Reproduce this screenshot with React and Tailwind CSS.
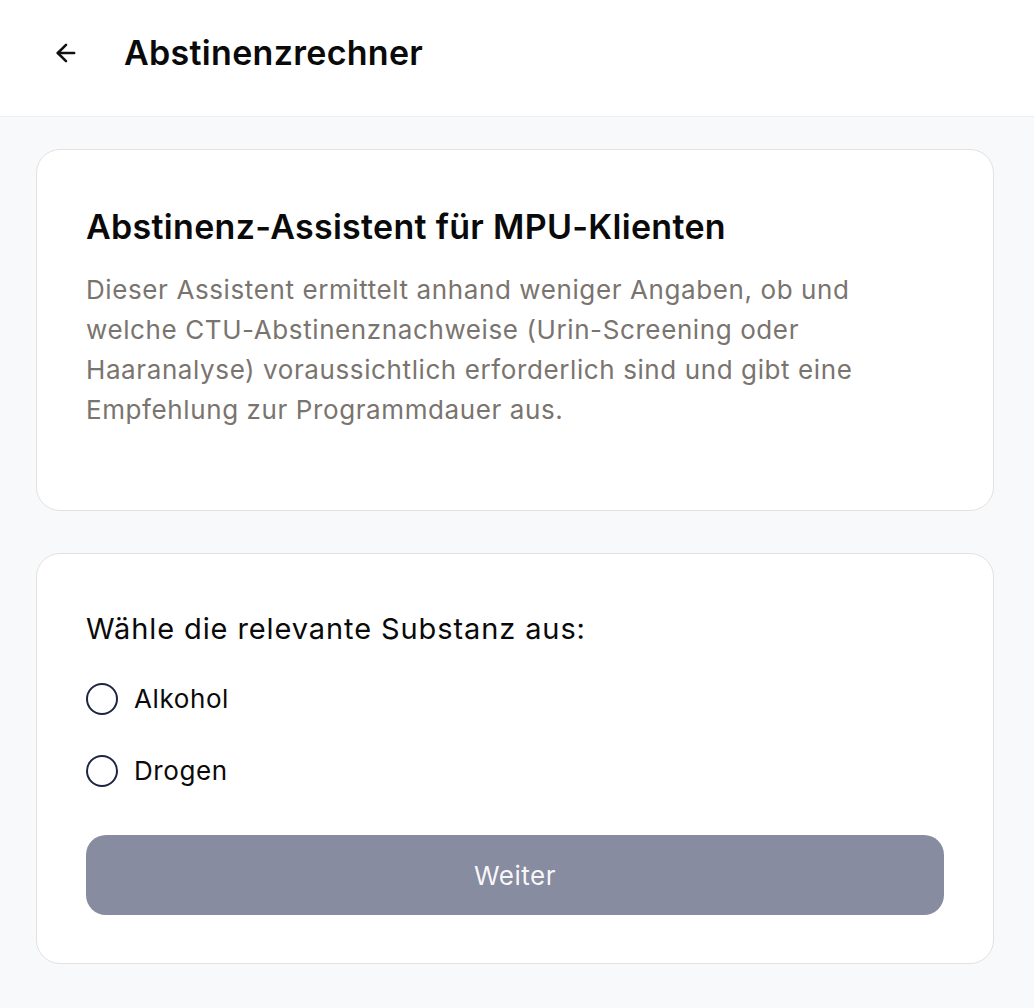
import React, { useState } from "react";
import { ArrowLeft } from "lucide-react";

const Radio = ({ label, checked, onChange }) => {
  return (
    <label className="flex items-center gap-[16px] cursor-pointer h-[40px]">
      <span
        className={
          "w-[32px] h-[32px] rounded-full border-[2px] border-[#1c2542] flex items-center justify-center shrink-0 " +
          (checked ? "bg-white" : "")
        }
        onClick={onChange}
      >
        {checked && <span className="w-[16px] h-[16px] rounded-full bg-[#1c2542]" />}
      </span>
      <span className="text-[26px] leading-[40px] tracking-[0.6px] text-[#0a0a0a]">{label}</span>
    </label>
  );
};

const App = () => {
  const [substance, setSubstance] = useState(null);

  return (
    <div className="min-h-screen bg-[#f8f9fb] font-['Inter',sans-serif]">
      {/* header */}
      <header className="h-[117px] pb-[11px] bg-white border-b border-[#eceef2] flex items-center pl-[52px] gap-[44px]">
        <ArrowLeft size={28} strokeWidth={2.2} className="text-[#111]" />
        <h1 className="text-[34px] font-semibold text-[#0a0a0a] tracking-[0.3px]">
          Abstinenzrechner
        </h1>
      </header>

      <main className="pl-[36px] pr-[40px] pt-[32px] pb-[40px] flex flex-col gap-[42px]">
        <div className="bg-white border border-[#e4e2e0] rounded-[24px] px-[49px] pt-[54px] pb-[80px]">
          <h2 className="text-[34px] leading-[46px] font-semibold text-[#0a0a0a] tracking-[0.3px]">
            Abstinenz-Assistent für MPU-Klienten
          </h2>
          <p className="mt-[20px] text-[26px] leading-[40px] tracking-[0.6px] text-[#7a746f] max-w-[800px]">
            Dieser Assistent ermittelt anhand weniger Angaben, ob und welche
            CTU-Abstinenznachweise (Urin-Screening oder Haaranalyse)
            voraussichtlich erforderlich sind und gibt eine Empfehlung zur
            Programmdauer aus.
          </p>
        </div>

        <div className="bg-white border border-[#e4e2e0] rounded-[24px] px-[49px] pt-[55px] pb-[48px]">
          <p className="text-[29px] leading-[40px] font-normal tracking-[0.9px] text-[#0a0a0a]">
            Wähle die relevante Substanz aus:
          </p>
          <div className="mt-[30px] flex flex-col gap-[32px]">
            <Radio
              label="Alkohol"
              checked={substance === "alkohol"}
              onChange={() => setSubstance("alkohol")}
            />
            <Radio
              label="Drogen"
              checked={substance === "drogen"}
              onChange={() => setSubstance("drogen")}
            />
          </div>
          <button
            disabled={!substance}
            className="mt-[44px] w-full h-[80px] rounded-[20px] bg-[#878ca0] text-white/95 text-[26px] tracking-[0.5px]"
          >
            Weiter
          </button>
        </div>
      </main>
    </div>
  );
};

export default App;
